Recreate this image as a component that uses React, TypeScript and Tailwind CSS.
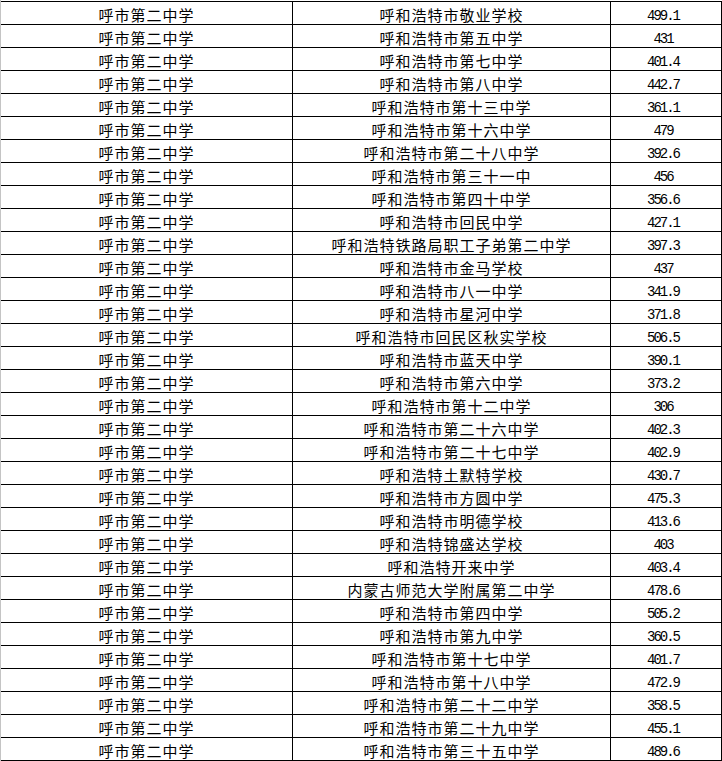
const rows: [string, string][] = [
  ['呼和浩特市敬业学校', '499.1'],
  ['呼和浩特市第五中学', '431'],
  ['呼和浩特市第七中学', '401.4'],
  ['呼和浩特市第八中学', '442.7'],
  ['呼和浩特市第十三中学', '361.1'],
  ['呼和浩特市第十六中学', '479'],
  ['呼和浩特市第二十八中学', '392.6'],
  ['呼和浩特市第三十一中', '456'],
  ['呼和浩特市第四十中学', '356.6'],
  ['呼和浩特市回民中学', '427.1'],
  ['呼和浩特铁路局职工子弟第二中学', '397.3'],
  ['呼和浩特市金马学校', '437'],
  ['呼和浩特市八一中学', '341.9'],
  ['呼和浩特市星河中学', '371.8'],
  ['呼和浩特市回民区秋实学校', '506.5'],
  ['呼和浩特市蓝天中学', '390.1'],
  ['呼和浩特市第六中学', '373.2'],
  ['呼和浩特市第十二中学', '306'],
  ['呼和浩特市第二十六中学', '402.3'],
  ['呼和浩特市第二十七中学', '402.9'],
  ['呼和浩特土默特学校', '430.7'],
  ['呼和浩特市方圆中学', '475.3'],
  ['呼和浩特市明德学校', '413.6'],
  ['呼和浩特锦盛达学校', '403'],
  ['呼和浩特开来中学', '403.4'],
  ['内蒙古师范大学附属第二中学', '478.6'],
  ['呼和浩特市第四中学', '505.2'],
  ['呼和浩特市第九中学', '360.5'],
  ['呼和浩特市第十七中学', '401.7'],
  ['呼和浩特市第十八中学', '472.9'],
  ['呼和浩特市第二十二中学', '358.5'],
  ['呼和浩特市第二十九中学', '455.1'],
  ['呼和浩特市第三十五中学', '489.6'],
];

export default function App() {
  return (
    <div className="flex w-[722px] h-[761px] overflow-hidden bg-white text-black">
      <div className="w-px h-full shrink-0 bg-[#c4c4c4]" />
      <div className="w-[721px] shrink-0 pt-px">
        <div className="border-b border-black">
          {rows.map(([school, score], i) => (
            <div key={i} className="grid grid-cols-[291px_318px_112px] h-[23px] border-t border-black">
              <div className="flex items-center justify-center pt-[2px] text-[15px] tracking-[1px] font-['Noto_Sans_CJK_SC',sans-serif] leading-none whitespace-nowrap">
                呼市第二中学
              </div>
              <div className="border-l border-black flex items-center justify-center pt-[2px] text-[15px] tracking-[1px] font-['Noto_Sans_CJK_SC',sans-serif] leading-none whitespace-nowrap">
                {school}
              </div>
              <div className="border-l border-r border-black flex items-center justify-center pt-[5px] pr-[6px] text-[14px] tracking-[-2px] font-['Liberation_Mono',monospace] leading-none">
                {score}
              </div>
            </div>
          ))}
        </div>
      </div>
    </div>
  );
}
